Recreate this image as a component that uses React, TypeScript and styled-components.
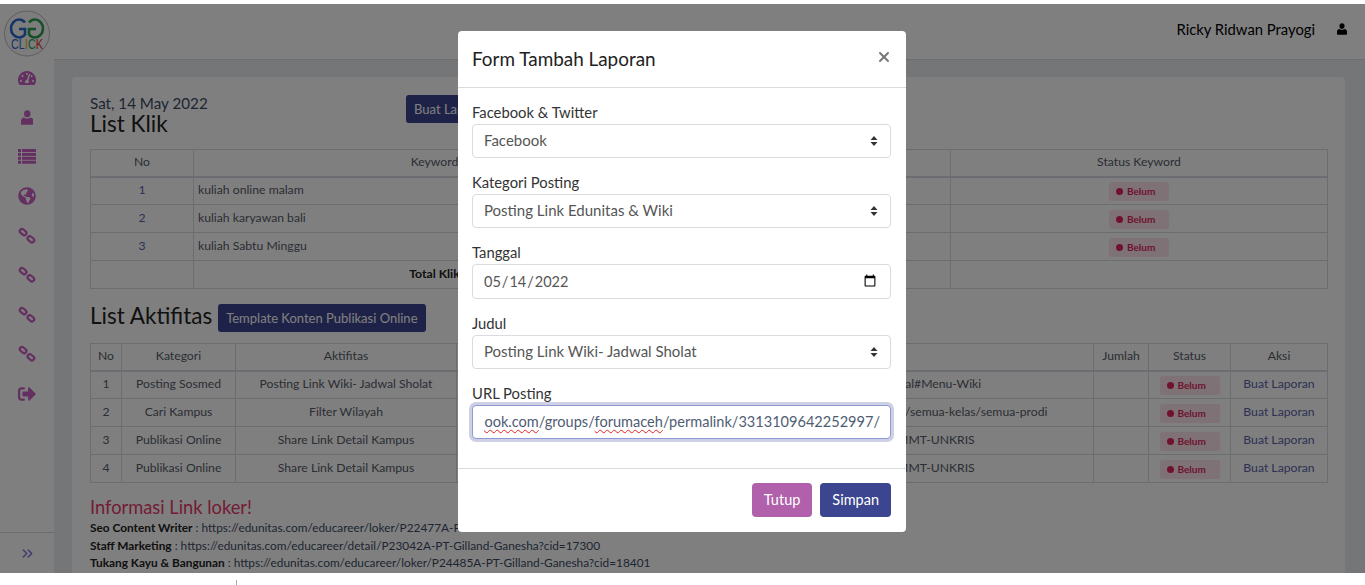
import styled, { createGlobalStyle } from "styled-components";
import { FaGlobeAmericas, FaSignOutAlt, FaTachometerAlt } from "react-icons/fa";
import { ChevronsRight, X } from "lucide-react";

const Font = `"Lato", "Open Sans", sans-serif`;
const Navy = "#3c4590";
const Purple = "#b160ab";
const Pink = "#e0245e";

const GlobalStyle = createGlobalStyle`
  html, body { margin: 0; padding: 0; background: #fff; }
  body { font-family: ${Font}; color: #3c4b64; overflow: hidden; }
  * { box-sizing: border-box; }
`;

const Page = styled.div`
  height: 585px;
  display: flex;
  flex-direction: column;
`;

const TopStrip = styled.div`
  height: 4px;
  background: #fff;
`;

const BottomStrip = styled.div`
  height: 12px;
  padding: 7px 0 0 236px;
  background: #fff;

  &::before {
    content: "";
    display: block;
    width: 1px;
    height: 5px;
    background: #aaa;
  }
`;

const Shell = styled.div`
  position: relative;
  flex: 1;
  min-height: 0;
  display: flex;
  overflow: hidden;
  background: #ebedef;
`;

const Sidebar = styled.aside`
  width: 54px;
  flex: none;
  display: flex;
  flex-direction: column;
  background: #fff;
`;

const LogoBox = styled.div`
  height: 54px;
  padding: 6px 0 0 4px;
`;

const Nav = styled.nav`
  flex: 1;
  display: flex;
  flex-direction: column;
`;

const NavItem = styled.div`
  height: 39.5px;
  display: flex;
  align-items: center;
  justify-content: center;
  color: #c85fc2;
  font-size: 18px;
`;

const SidebarToggle = styled.div`
  height: 41px;
  display: flex;
  align-items: center;
  justify-content: center;
  border-top: 1px solid #d8dbe0;
  color: #8a6fd8;
`;

const Main = styled.main`
  flex: 1;
  min-width: 0;
  display: flex;
  flex-direction: column;
`;

const TopBar = styled.header`
  height: 56px;
  flex: none;
  display: flex;
  align-items: center;
  justify-content: flex-end;
  gap: 22px;
  padding: 0 18px 5px 0;
  background: #fff;
  border-bottom: 1px solid #d8dbe0;
  font-size: 14.8px;
  color: #000;
`;

const Content = styled.div`
  flex: 1;
  padding: 17px 20px 0 18px;
`;

const Card = styled.section`
  height: 100%;
  padding: 18px 18px 0;
  background: #fff;
  border-radius: 4px 4px 0 0;
`;

const CardHead = styled.div`
  height: 54px;
  display: grid;
  grid-template-columns: 316px auto;
  justify-content: start;
  align-items: start;
`;

const DateLine = styled.div`
  font-size: 15.2px;
  line-height: 17px;
`;

const Title = styled.h2`
  margin: 0;
  font-size: 22.5px;
  font-weight: 400;
  line-height: 24px;
  color: #222;
`;

const SmallButton = styled.button`
  height: 28px;
  padding: 0 8px;
  border: 0;
  border-radius: 3px;
  background: ${Navy};
  color: #fff;
  font-family: ${Font};
  font-size: 13px;
`;

const Table = styled.table`
  width: 1237px;
  table-layout: fixed;
  border-collapse: collapse;
  font-size: 12.2px;
  color: #565c68;
`;

const Col = styled.col<{ $w: number }>`
  width: ${(p) => p.$w}px;
`;

const Th = styled.th`
  height: 27px;
  padding: 0 0 2px;
  border: 1px solid #d8dbe0;
  border-bottom-width: 2px;
  font-weight: 400;
  text-align: center;
`;

const Td = styled.td<{ $left?: boolean; $bold?: boolean; $link?: boolean }>`
  height: 28px;
  padding: 0 4px 2px;
  border: 1px solid #d8dbe0;
  text-align: ${(p) => (p.$left ? "left" : "center")};
  font-weight: ${(p) => (p.$bold ? 700 : 400)};
  color: ${(p) => (p.$bold ? "#222" : p.$link ? "#5a62a8" : "inherit")};
  white-space: nowrap;
  overflow: hidden;
`;

const Badge = styled.span`
  display: inline-flex;
  align-items: center;
  gap: 4px;
  width: 60px;
  height: 19px;
  margin-top: 3px;
  padding-left: 7px;
  border-radius: 3px;
  background: #fce4ec;
  color: ${Pink};
  font-size: 10px;
  font-weight: 700;
  vertical-align: middle;

  &::before {
    content: "";
    width: 7px;
    height: 7px;
    border-radius: 50%;
    background: ${Pink};
  }
`;

const SectionRow = styled.div`
  display: flex;
  align-items: flex-start;
  gap: 6px;
  margin: 15px 0 11px;
  height: 28px;
`;

const InfoTitle = styled.h3`
  margin: 13px 0 0;
  font-size: 18.3px;
  font-weight: 400;
  line-height: 23px;
  color: #e8396a;
`;

const InfoLine = styled.div`
  font-size: 11.85px;
  line-height: 17.5px;
  white-space: nowrap;

  b {
    color: #222;
  }
`;

const Overlay = styled.div`
  position: absolute;
  inset: 0;
  display: flex;
  justify-content: center;
  align-items: flex-start;
  padding: 27px 1px 0 0;
  background: rgba(0, 0, 0, 0.5);
`;

const Modal = styled.div`
  width: 448px;
  height: 501px;
  display: flex;
  flex-direction: column;
  background: #fff;
  border-radius: 4px;
`;

const ModalHeader = styled.div`
  height: 57px;
  flex: none;
  display: flex;
  align-items: center;
  justify-content: space-between;
  padding: 0 14px 2px;
  border-bottom: 1px solid #d8dbe0;
`;

const ModalTitle = styled.h5`
  margin: 0;
  font-size: 18.9px;
  font-weight: 400;
  color: #222;
`;

const CloseIcon = styled(X)`
  margin-top: -2px;
  color: #777;
`;

const ModalBody = styled.div`
  flex: 1;
  display: flex;
  flex-direction: column;
  gap: 14px;
  padding: 14px 15px 0 14px;
`;

const Field = styled.label`
  display: block;
  font-size: 14.8px;
  line-height: 20px;
  color: #333;
`;

const controlCss = `
  display: block;
  width: 100%;
  height: 34px;
  margin-top: 2px;
  padding: 0 11px;
  border: 1px solid #d8dbe0;
  border-radius: 4px;
  background-color: #fff;
  color: #565656;
  font-family: ${Font};
  font-size: 15px;
`;

const Select = styled.select`
  ${controlCss}
  padding-bottom: 2px;
  appearance: none;
  background-image: url("data:image/svg+xml,%3Csvg xmlns='http://www.w3.org/2000/svg' width='8' height='10'%3E%3Cpath fill='%23333' d='M4 0l3.5 4h-7zM4 10L.5 6h7z'/%3E%3C/svg%3E");
  background-repeat: no-repeat;
  background-position: right 12px center;
`;

const DateInput = styled.input`
  ${controlCss}
  height: 35px;
  padding-left: 10px;
  font-size: 14.5px;
  outline: none;
`;

const UrlBox = styled.div`
  ${controlCss}
  display: flex;
  align-items: center;
  padding-right: 10px;
  border-color: #8f98d8;
  font-size: 14.55px;
  box-shadow: 0 0 0 3px rgba(60, 69, 144, 0.25);
`;

const UrlText = styled.div`
  flex: 1;
  display: flex;
  justify-content: flex-end;
  overflow: hidden;
  white-space: pre;
  line-height: 26px;
  color: #4f5d73;
`;

const Squiggle = styled.span`
  text-decoration: underline wavy #e02020 0.6px;
  text-underline-offset: 2px;
`;

const ModalFooter = styled.div`
  height: 64px;
  flex: none;
  display: flex;
  align-items: center;
  justify-content: flex-end;
  gap: 8px;
  padding: 0 15px 2px;
  border-top: 1px solid #d8dbe0;
`;

const Button = styled.button<{ $color: string }>`
  height: 34px;
  padding: 0 12px;
  border: 0;
  border-radius: 4px;
  background: ${(p) => p.$color};
  color: #fff;
  font-family: ${Font};
  font-size: 14.5px;
`;

const Logo = () => (
  <svg width="46" height="47" viewBox="0 0 46 47">
    <circle cx="23" cy="23.5" r="22.5" fill="#fbfbfb" stroke="#bbb" />
    <path d="M21 12.5 A8 9 0 1 0 21 24.5 V19 H15" fill="none" stroke="#2b6bd0" strokeWidth="2.6" />
    <path d="M25 12.5 A8 9 0 1 1 25 24.5 V19 H32" fill="none" stroke="#2aa050" strokeWidth="2.6" />
    <text x="7" y="39" fontFamily="Liberation Sans, sans-serif" fontSize="14" textLength="32" lengthAdjust="spacingAndGlyphs">
      <tspan fill="#2b6bd0">CL</tspan>
      <tspan fill="#e8b010">I</tspan>
      <tspan fill="#2aa050">C</tspan>
      <tspan fill="#e03020">K</tspan>
    </text>
  </svg>
);

const UserIcon = ({ size = 12.5 }: { size?: number }) => (
  <svg width={size} height={size * 1.17} viewBox="0 0 14 15" preserveAspectRatio="none" fill="currentColor">
    <circle cx="7" cy="3.9" r="3.6" />
    <path d="M1 15 a1 1 0 0 1 -1 -1 V11.5 C0 9 1.6 7.8 3.6 7.6 C5.5 9.2 8.5 9.2 10.4 7.6 C12.4 7.8 14 9 14 11.5 V14 a1 1 0 0 1 -1 1 Z" />
  </svg>
);

const ListIcon = () => (
  <svg width="18" height="15" viewBox="0 0 18 15" fill="currentColor">
    {[0, 3.9, 7.8, 11.7].map((y) => (
      <g key={y}>
        <rect x="0" y={y} width="3" height="3" />
        <rect x="4" y={y} width="14" height="3" />
      </g>
    ))}
  </svg>
);

const ChainIcon = () => (
  <svg width="20" height="20" viewBox="0 0 18 18" fill="none" stroke="currentColor" strokeWidth="2">
    <rect x="2.25" y="3.5" width="6.5" height="4" rx="2" transform="rotate(40 5.5 5.5)" />
    <rect x="9.25" y="10" width="6.5" height="4" rx="2" transform="rotate(40 12.5 12)" />
  </svg>
);

const keywords = ["kuliah online malam", "kuliah karyawan bali", "kuliah Sabtu Minggu"];

const activities = [
  ["Posting Sosmed", "Posting Link Wiki- Jadwal Sholat", "https://edunitas.com/wiki/informasi/jadwal-sholat-hari-ini-portal#Menu-Wiki"],
  ["Cari Kampus", "Filter Wilayah", "http://edunitas.com/id/kampus/cari-kampus/semua-wilayah/semua-jenjang/semua-kelas/semua-prodi"],
  ["Publikasi Online", "Share Link Detail Kampus", "https://edunitas.com/kampus/detail/programs-pascasarjana-MMT-UNKRIS"],
  ["Publikasi Online", "Share Link Detail Kampus", "https://edunitas.com/kampus/detail/programs-pascasarjana-MMT-UNKRIS"],
];

const App = () => {
  return (
    <Page>
      <GlobalStyle />
      <TopStrip />
      <Shell>
        <Sidebar>
          <LogoBox>
            <Logo />
          </LogoBox>
          <Nav>
            <NavItem><FaTachometerAlt /></NavItem>
            <NavItem><UserIcon /></NavItem>
            <NavItem><ListIcon /></NavItem>
            <NavItem><FaGlobeAmericas /></NavItem>
            <NavItem><ChainIcon /></NavItem>
            <NavItem><ChainIcon /></NavItem>
            <NavItem><ChainIcon /></NavItem>
            <NavItem><ChainIcon /></NavItem>
            <NavItem><FaSignOutAlt /></NavItem>
          </Nav>
          <SidebarToggle>
            <ChevronsRight size={17} />
          </SidebarToggle>
        </Sidebar>
        <Main>
          <TopBar>
            Ricky Ridwan Prayogi
            <UserIcon size={10} />
          </TopBar>
          <Content>
            <Card>
              <CardHead>
                <div>
                  <DateLine>Sat, 14 May 2022</DateLine>
                  <Title>List Klik</Title>
                </div>
                <SmallButton>Buat Laporan</SmallButton>
              </CardHead>
              <Table>
                <colgroup>
                  <Col $w={103} />
                  <Col $w={482} />
                  <Col $w={275} />
                  <Col $w={377} />
                </colgroup>
                <thead>
                  <tr>
                    <Th>No</Th>
                    <Th>Keyword</Th>
                    <Th>Klik</Th>
                    <Th>Status Keyword</Th>
                  </tr>
                </thead>
                <tbody>
                  {keywords.map((keyword, i) => (
                    <tr key={keyword}>
                      <Td $link>{i + 1}</Td>
                      <Td $left>{keyword}</Td>
                      <Td>0</Td>
                      <Td><Badge>Belum</Badge></Td>
                    </tr>
                  ))}
                  <tr>
                    <Td />
                    <Td $bold>Total Klik</Td>
                    <Td>0</Td>
                    <Td />
                  </tr>
                </tbody>
              </Table>
              <SectionRow>
                <Title>List Aktifitas</Title>
                <SmallButton>Template Konten Publikasi Online</SmallButton>
              </SectionRow>
              <Table>
                <colgroup>
                  <Col $w={31} />
                  <Col $w={114} />
                  <Col $w={221} />
                  <Col $w={637} />
                  <Col $w={55} />
                  <Col $w={82} />
                  <Col $w={97} />
                </colgroup>
                <thead>
                  <tr>
                    <Th>No</Th>
                    <Th>Kategori</Th>
                    <Th>Aktifitas</Th>
                    <Th>Link</Th>
                    <Th>Jumlah</Th>
                    <Th>Status</Th>
                    <Th>Aksi</Th>
                  </tr>
                </thead>
                <tbody>
                  {activities.map(([category, activity, link], i) => (
                    <tr key={i}>
                      <Td>{i + 1}</Td>
                      <Td>{category}</Td>
                      <Td>{activity}</Td>
                      <Td>{link}</Td>
                      <Td />
                      <Td><Badge>Belum</Badge></Td>
                      <Td $link>Buat Laporan</Td>
                    </tr>
                  ))}
                </tbody>
              </Table>
              <InfoTitle>Informasi Link loker!</InfoTitle>
              <InfoLine><b>Seo Content Writer</b> : https://edunitas.com/educareer/loker/P22477A-PT-Gilland-Ganesha?cid=17299</InfoLine>
              <InfoLine><b>Staff Marketing</b> : https://edunitas.com/educareer/detail/P23042A-PT-Gilland-Ganesha?cid=17300</InfoLine>
              <InfoLine><b>Tukang Kayu &amp; Bangunan</b> : https://edunitas.com/educareer/loker/P24485A-PT-Gilland-Ganesha?cid=18401</InfoLine>
            </Card>
          </Content>
        </Main>
        <Overlay>
          <Modal>
            <ModalHeader>
              <ModalTitle>Form Tambah Laporan</ModalTitle>
              <CloseIcon size={16} strokeWidth={3} />
            </ModalHeader>
            <ModalBody>
              <Field>
                Facebook &amp; Twitter
                <Select defaultValue="Facebook">
                  <option>Facebook</option>
                  <option>Twitter</option>
                </Select>
              </Field>
              <Field>
                Kategori Posting
                <Select defaultValue="Posting Link Edunitas & Wiki">
                  <option>Posting Link Edunitas &amp; Wiki</option>
                </Select>
              </Field>
              <Field>
                Tanggal
                <DateInput type="date" defaultValue="2022-05-14" />
              </Field>
              <Field>
                Judul
                <Select defaultValue="Posting Link Wiki- Jadwal Sholat">
                  <option>Posting Link Wiki- Jadwal Sholat</option>
                </Select>
              </Field>
              <Field>
                URL Posting
                <UrlBox>
                  <UrlText>
                    <span>
                      https://www.<Squiggle>facebook.com</Squiggle>/groups/<Squiggle>forumaceh</Squiggle>/permalink/3313109642252997/
                    </span>
                  </UrlText>
                </UrlBox>
              </Field>
            </ModalBody>
            <ModalFooter>
              <Button $color={Purple}>Tutup</Button>
              <Button $color={Navy}>Simpan</Button>
            </ModalFooter>
          </Modal>
        </Overlay>
      </Shell>
      <BottomStrip />
    </Page>
  );
};

export default App;
